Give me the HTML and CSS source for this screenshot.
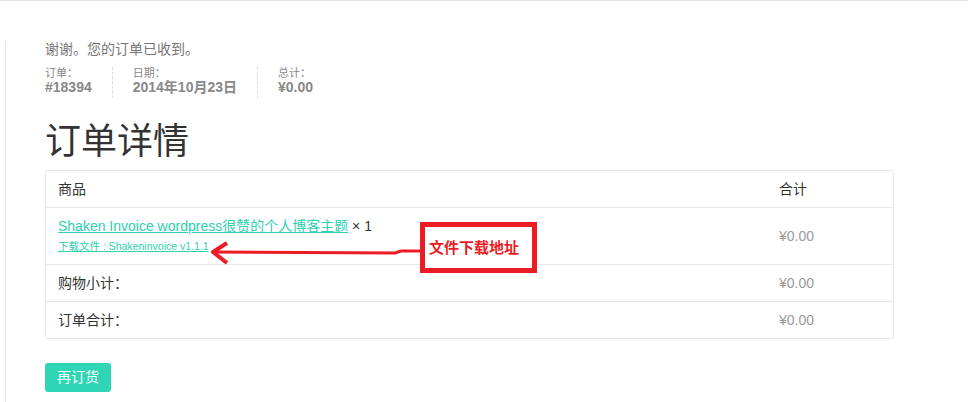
FILE: index.html
```html
<!DOCTYPE html>
<html lang="zh-CN">
<head>
    <meta charset="UTF-8">
    <meta name="viewport" content="width=device-width, initial-scale=1.0">
    <title>订单已收到</title>
    <link rel="stylesheet" href="styles.css">
</head>
<body>
    <div class="topbar"></div>

    <div class="page">
        <p class="thanks">谢谢。您的订单已收到。</p>

        <ul class="order-overview">
            <li>订单：<strong>#18394</strong></li>
            <li>日期：<strong>2014年10月23日</strong></li>
            <li>总计：<strong>¥0.00</strong></li>
        </ul>

        <h2>订单详情</h2>

        <table class="order-table">
            <thead>
                <tr>
                    <th>商品</th>
                    <th class="col-total">合计</th>
                </tr>
            </thead>
            <tbody>
                <tr>
                    <td>
                        <a href="#">Shaken Invoice wordpress很赞的个人博客主题</a> <span class="qty">× 1</span>
                        <div class="download"><a href="#">下载文件 : Shakeninvoice v1.1.1</a></div>
                    </td>
                    <td class="price">¥0.00</td>
                </tr>
                <tr>
                    <td>购物小计：</td>
                    <td class="price">¥0.00</td>
                </tr>
                <tr>
                    <td>订单合计：</td>
                    <td class="price">¥0.00</td>
                </tr>
            </tbody>
        </table>

        <div class="actions">
            <a href="#" class="btn-again">再订货</a>
        </div>
    </div>

    <!-- annotation drawn over the screenshot -->
    <svg class="note-arrow" width="220" height="32" viewBox="0 0 220 32">
        <path d="M8 14 L190 15 L196 13 L218 13" fill="none" stroke="#ec1c24" stroke-width="3"/>
        <path d="M22 5 L8 14 L22 25" fill="none" stroke="#ec1c24" stroke-width="4" stroke-linejoin="round"/>
    </svg>
    <div class="note-box">文件下载地址</div>
</body>
</html>
```

FILE: styles.css
```css
body {
    font-family: "Liberation Sans", "Noto Sans CJK SC", sans-serif;
    margin: 0;
    background-color: #fff;
    color: #333;
}
a {
    color: #2dd0b0;
}
.topbar {
    border-top: 1px solid #e6e6e6;
}
.page {
    margin: 40px 0 0 5px;
    border-left: 1px solid #e6e6e6;
    padding-left: 39px;
    width: 849px;
    min-height: 361px;
}
.thanks {
    margin: 0;
    font-size: 14px;
    line-height: 16px;
    color: #777;
}
.order-overview {
    display: flex;
    list-style: none;
    margin: 10px 0 0;
    padding: 0;
}
.order-overview li {
    font-size: 11px;
    line-height: 12px;
    color: #888;
    padding: 0 20px 2px 0;
    margin-right: 20px;
    border-right: 1px dashed #ddd;
}
.order-overview li:last-child {
    border-right: none;
}
.order-overview strong {
    display: block;
    font-size: 14px;
    line-height: 17px;
    color: #888;
}
h2 {
    font-size: 36px;
    line-height: 40px;
    font-weight: normal;
    color: #333;
    margin: 24px 0 8px;
}
.order-table {
    width: 849px;
    border: 1px solid #e8e8e8;
    border-radius: 3px;
    border-collapse: separate;
    border-spacing: 0;
    font-size: 14px;
}
.order-table th,
.order-table td {
    padding: 8px 12px;
    line-height: 20px;
    text-align: left;
    font-weight: normal;
    vertical-align: middle;
}
.order-table tbody td {
    border-top: 1px solid #e8e8e8;
}
.order-table .col-total {
    width: 102px;
}
.order-table .price {
    color: #999;
}
.qty {
    color: #333;
}
.download {
    font-size: 10.5px;
    line-height: 20px;
}
.actions {
    display: flex;
    margin-top: 24px;
}
.btn-again {
    background-color: #2fd5b5;
    color: #fff;
    text-decoration: none;
    font-size: 14px;
    line-height: 19px;
    padding: 5px 12px;
    border-radius: 3px;
}
.note-arrow {
    position: absolute;
    left: 205px;
    top: 238px;
}
.note-box {
    position: absolute;
    left: 420px;
    top: 222px;
    width: 103px;
    height: 41px;
    border: 5px solid #ec1c24;
    background-color: #fff;
    padding-left: 4px;
    color: #ec1c24;
    font-size: 15px;
    font-weight: bold;
    line-height: 41px;
}
```
